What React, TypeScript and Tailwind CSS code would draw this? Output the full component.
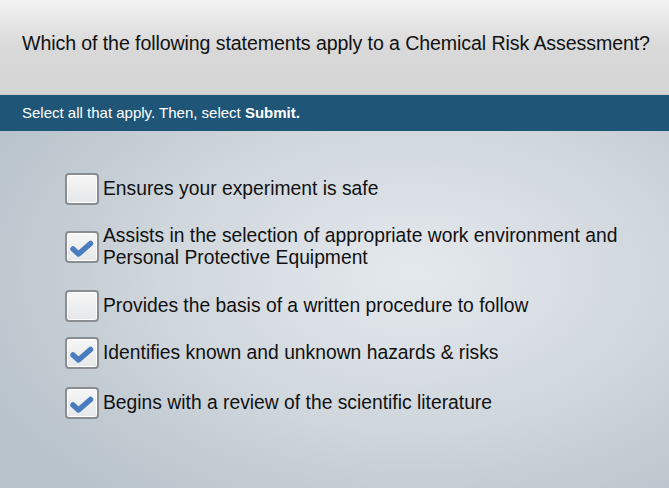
import React from 'react';

const items = [
  { text: 'Ensures your experiment is safe', checked: false, mt: 'mt-[42px]' },
  {
    text: 'Assists in the selection of appropriate work environment and Personal Protective Equipment',
    checked: true,
    mt: 'mt-[20px]',
  },
  { text: 'Provides the basis of a written procedure to follow', checked: false, mt: 'mt-[21px]' },
  { text: 'Identifies known and unknown hazards & risks', checked: true, mt: 'mt-[15px]' },
  { text: 'Begins with a review of the scientific literature', checked: true, mt: 'mt-[18px]' },
];

function CheckBox({ checked }: { checked: boolean }) {
  return (
    <div className="w-[34px] h-[32px] shrink-0 rounded-[4px] border-2 border-[#8a8e92] bg-gradient-to-b from-[#f6f6f6] to-[#e6e7e9] flex items-center justify-center shadow-[inset_0_0_0_1px_#fdfdfd]">
      {checked && (
        <svg width="26" height="20" viewBox="0 0 26 20" className="mt-[3px]">
          <path
            d="M4 10 L9.5 15 L21.5 4.5"
            fill="none"
            stroke="#4a7dc0"
            strokeWidth="5.5"
            strokeLinecap="round"
            strokeLinejoin="round"
          />
        </svg>
      )}
    </div>
  );
}

export default function App() {
  return (
    <div
      className="w-[669px] h-[488px] overflow-hidden flex flex-col"
      style={{ fontFamily: '"Liberation Sans", Arial, sans-serif' }}
    >
      {/* Question header */}
      <div className="h-[94px] shrink-0 bg-gradient-to-b from-[#f2f2f2] via-[#d9d9d9] to-[#d4d4d4] flex items-center pl-[22px] pb-[6px]">
        <h1 className="text-[19.6px] text-[#111] tracking-[-0.1px]">
          Which of the following statements apply to a Chemical Risk Assessment?
        </h1>
      </div>

      {/* Instruction bar */}
      <div className="h-[37px] shrink-0 bg-[#1f5678] flex items-center pl-[22px] border-t border-[#c8c8c8]">
        <p className="text-[15px] text-white">
          Select all that apply. Then, select <span className="font-bold">Submit.</span>
        </p>
      </div>

      {/* Options */}
      <div className="flex-1 relative bg-[radial-gradient(ellipse_70%_80%_at_62%_40%,#e4e9ed_0%,#cfd6dc_55%,#b9c3cb_100%)]">
        <div className="flex flex-col pl-[65px]">
          {items.map((item, i) => (
            <div key={i} className={`flex items-center gap-[4px] ${item.mt}`}>
              <CheckBox checked={item.checked} />
              <span className="text-[19.3px] leading-[22px] text-[#111] max-w-[540px]">{item.text}</span>
            </div>
          ))}
        </div>
      </div>
    </div>
  );
}
